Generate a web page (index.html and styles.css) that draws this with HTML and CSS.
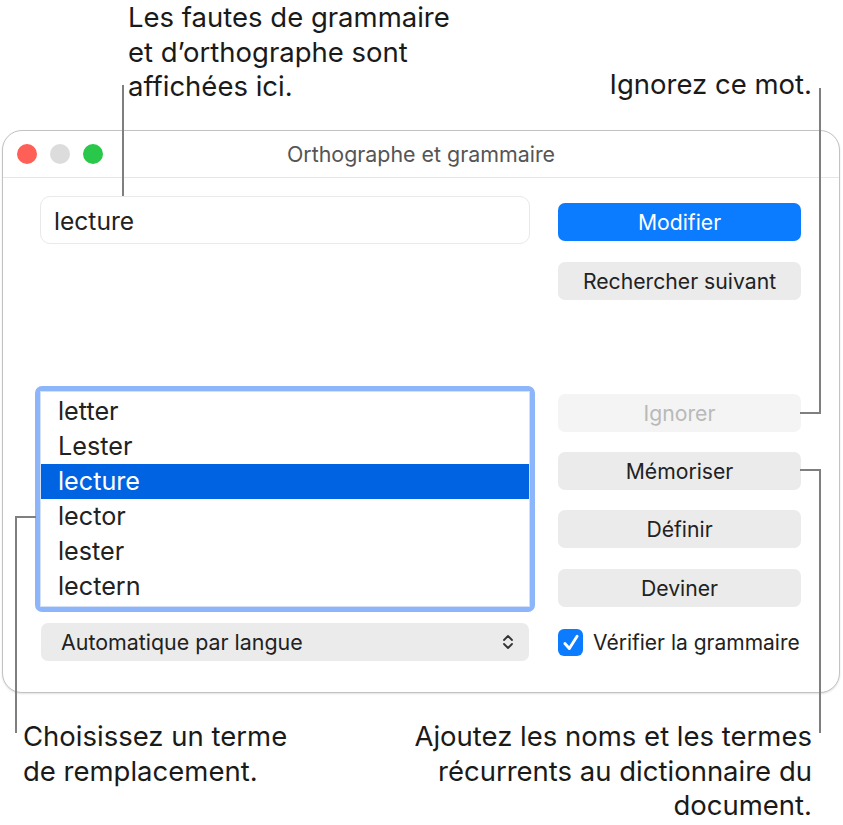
FILE: index.html
```html
<!DOCTYPE html>
<html lang="fr">
<head>
    <meta charset="UTF-8">
    <meta name="viewport" content="width=device-width, initial-scale=1.0">
    <title>Orthographe et grammaire</title>
    <link rel="stylesheet" href="styles.css">
</head>
<body>

<div class="page">

    <!-- Légendes du haut -->
    <div class="top-notes">
        <p class="note note-left">Les fautes de grammaire<br>et d’orthographe sont<br>affichées ici.</p>
        <p class="note note-right">Ignorez ce mot.</p>
    </div>

    <!-- Fenêtre -->
    <div class="window">
        <div class="titlebar">
            <div class="lights">
                <span class="light red"></span>
                <span class="light gray"></span>
                <span class="light green"></span>
            </div>
            <div class="title">Orthographe et grammaire</div>
            <div></div>
        </div>

        <div class="content">
            <div class="col-left">
                <div class="field">lecture</div>

                <div class="list-ring">
                    <ul class="list">
                        <li>letter</li>
                        <li>Lester</li>
                        <li class="selected">lecture</li>
                        <li>lector</li>
                        <li>lester</li>
                        <li>lectern</li>
                    </ul>
                </div>

                <div class="popup">
                    <span>Automatique par langue</span>
                    <svg class="chevrons" width="12" height="18" viewBox="0 0 12 18">
                        <path d="M2 7 L6 3 L10 7" fill="none" stroke="#333" stroke-width="1.8" stroke-linecap="round" stroke-linejoin="round"/>
                        <path d="M2 11 L6 15 L10 11" fill="none" stroke="#333" stroke-width="1.8" stroke-linecap="round" stroke-linejoin="round"/>
                    </svg>
                </div>
            </div>

            <div class="col-right">
                <div class="btn primary b-modifier">Modifier</div>
                <div class="btn b-rechercher">Rechercher suivant</div>
                <div class="btn disabled b-ignorer">Ignorer</div>
                <div class="btn b-memoriser">Mémoriser</div>
                <div class="btn b-definir">Définir</div>
                <div class="btn b-deviner">Deviner</div>
                <div class="check-row">
                    <span class="checkbox">
                        <svg width="20" height="20" viewBox="0 0 18 18">
                            <path d="M3.5 9.5 L7.5 14 L14.5 3" fill="none" stroke="#fff" stroke-width="2.6" stroke-linecap="round" stroke-linejoin="round"/>
                        </svg>
                    </span>
                    <span class="check-label">Vérifier la grammaire</span>
                </div>
            </div>
        </div>
    </div>

    <!-- Légendes du bas -->
    <div class="bottom-notes">
        <p class="note">Choisissez un terme<br>de remplacement.</p>
        <p class="note note-br">Ajoutez les noms et les termes<br>récurrents au dictionnaire du<br>document.</p>
    </div>

    <!-- Traits de rappel -->
    <span class="lead v" style="left:122px; top:85px; height:111px;"></span>
    <span class="lead v" style="left:819px; top:88px; height:326px;"></span>
    <span class="lead h" style="left:800px; top:412px; width:21px;"></span>
    <span class="lead h" style="left:800px; top:469px; width:21px;"></span>
    <span class="lead v" style="left:819px; top:469px; height:264px;"></span>
    <span class="lead h" style="left:15px; top:516px; width:21px;"></span>
    <span class="lead v" style="left:15px; top:516px; height:217px;"></span>

</div>

</body>
</html>
```

FILE: styles.css
```css
body {
    margin: 0;
    font-family: Inter, "Noto Sans", sans-serif;
    color: #1d1d1d;
    background: #ffffff;
}
.page {
    position: relative;
    width: 843px;
    height: 825px;
    overflow: hidden;
}

/* légendes */
.note {
    margin: 0;
    font-size: 27.5px;
    line-height: 34.5px;
    color: #1a1a1a;
    white-space: nowrap;
}
.top-notes {
    height: 130px;
    display: flex;
    justify-content: space-between;
}
.note-left {
    padding-left: 128px;
    padding-top: 0;
}
.note-right {
    padding-top: 67px;
    padding-right: 31px;
}
.bottom-notes {
    display: flex;
    justify-content: space-between;
    padding: 26px 31px 0 23px;
}
.note-br {
    text-align: right;
}

/* fenêtre */
.window {
    margin-left: 2px;
    width: 836px;
    height: 561px;
    border: 1px solid #c2c2c2;
    border-radius: 20px;
    box-shadow: 0 1px 2px rgba(0, 0, 0, 0.12);
    background: #ffffff;
}
.titlebar {
    height: 46px;
    border-bottom: 1px solid #e6e6e6;
    display: grid;
    grid-template-columns: 1fr auto 1fr;
    align-items: center;
}
.lights {
    display: flex;
    gap: 13px;
    padding-left: 14px;
}
.light {
    width: 20px;
    height: 20px;
    border-radius: 50%;
}
.red { background: #fe5f57; }
.gray { background: #dcdcdc; }
.green { background: #2ac84a; }
.title {
    font-size: 21.4px;
    color: #555555;
}

.content {
    display: flex;
    justify-content: space-between;
    padding: 0 38px 0 32px;
}
.col-left {
    width: 500px;
    display: flex;
    flex-direction: column;
}
.field {
    margin: 18px 5px 0 5px;
    height: 46px;
    border: 1px solid #e9e9e9;
    border-radius: 10px;
    padding-left: 13px;
    font-size: 24.6px;
    line-height: 48px;
    color: #222;
}
.list-ring {
    margin-top: 142px;
    height: 216px;
    padding: 5px;
    background: #8db5f9;
    border-radius: 7px;
}
.list {
    list-style: none;
    margin: 0;
    height: 210px;
    padding: 2px 0;
    background: #ffffff;
    border: 1px solid #d2e0f8;
}
.list li {
    height: 35px;
    line-height: 35px;
    padding-left: 17px;
    font-size: 25.2px;
    color: #222;
}
.list li.selected {
    background: #0063e1;
    color: #ffffff;
}
.popup {
    margin: 11px 6px 0 6px;
    height: 38px;
    border-radius: 7px;
    background: #ebebeb;
    display: flex;
    align-items: center;
    justify-content: space-between;
    padding: 0 15px 0 20px;
    font-size: 21.4px;
    color: #222;
}

.col-right {
    width: 243px;
    display: flex;
    flex-direction: column;
}
.btn {
    height: 38px;
    line-height: 38px;
    border-radius: 7px;
    background: #ebebeb;
    text-align: center;
    font-size: 21.2px;
    color: #222;
}
.btn.primary {
    background: #0b7bff;
    color: #ffffff;
}
.btn.disabled {
    background: #f4f4f4;
    color: #b9b9b9;
}
.b-modifier { margin-top: 25px; }
.b-rechercher { margin-top: 21px; }
.b-ignorer { margin-top: 94px; }
.b-memoriser { margin-top: 20px; }
.b-definir { margin-top: 20px; }
.b-deviner { margin-top: 21px; }
.check-row {
    margin-top: 22px;
    display: flex;
    align-items: center;
    gap: 10px;
    font-size: 21px;
    color: #222;
    white-space: nowrap;
}
.check-label {
    flex-shrink: 0;
}
.checkbox {
    flex-shrink: 0;
    width: 25px;
    height: 27px;
    border-radius: 6px;
    background: #0b7bff;
    display: flex;
    align-items: center;
    justify-content: center;
}

/* traits */
.lead {
    position: absolute;
    background: #7f7f7f;
}
.lead.v { width: 2px; }
.lead.h { height: 2px; }
```
